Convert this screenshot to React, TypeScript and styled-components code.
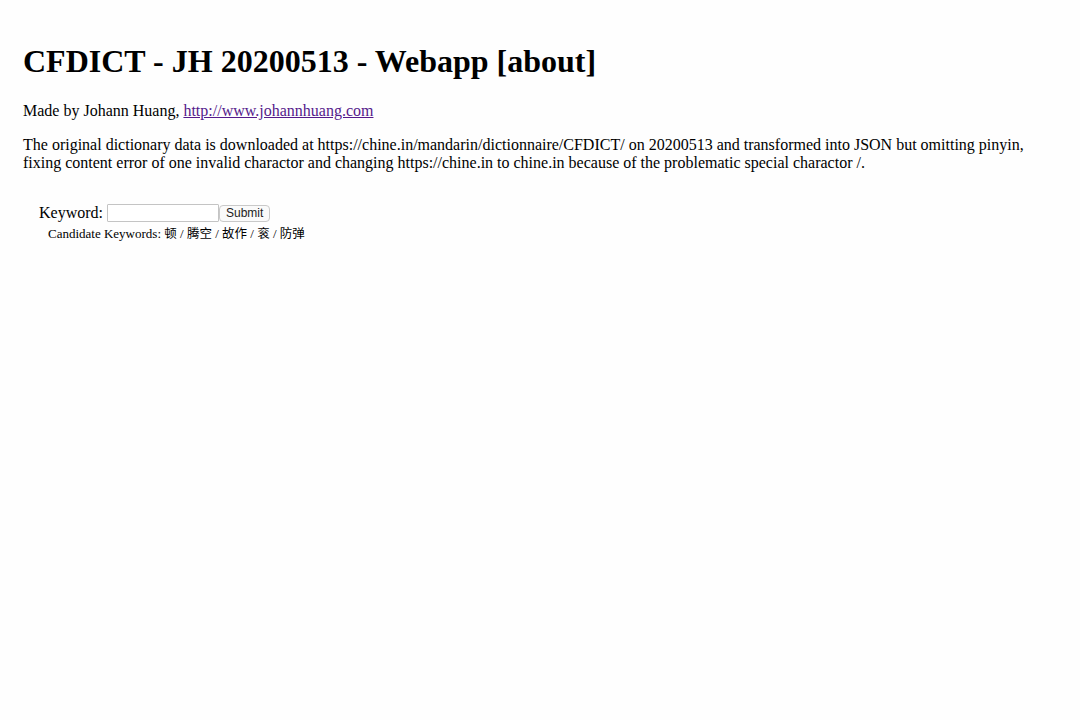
import React from "react";
import styled, { createGlobalStyle } from "styled-components";

const Global = createGlobalStyle`
  html, body { margin: 0; padding: 0; background: #fefefe; }
  body { font-family: "Liberation Serif", "Times New Roman", serif; color: #000; }
`;

const Page = styled.div`
  padding: 22px 23px;
`;

const Title = styled.h1`
  font-size: 32px;
  font-weight: bold;
  margin: 21.44px 0;
`;

const Para = styled.p`
  font-size: 16px;
  margin: 16px 0;
  line-height: 18px;
`;

const Link = styled.a`
  color: #551a8b;
  text-decoration: underline;
`;

const Form = styled.form`
  margin: 31px 0 0 16px;
`;

const Row = styled.div`
  font-size: 16px;
  line-height: 20px;
  display: flex;
  align-items: center;
`;

const Label = styled.label`
  margin-right: 4px;
`;

const Input = styled.input`
  box-sizing: border-box;
  width: 112px;
  height: 18px;
  border: 1px solid #c4c4c4;
  border-radius: 1px;
  padding: 1px 2px;
  margin: 0;
  font-size: 13px;
  background: #fff;
  outline: none;
`;

const Button = styled.button`
  box-sizing: border-box;
  height: 17px;
  padding: 0 6px;
  margin: 1px 0 0 0;
  font-family: "Liberation Sans", Arial, sans-serif;
  font-size: 12px;
  line-height: 15px;
  color: #222;
  background: #fafafa;
  border: 1px solid #c9c9c9;
  border-radius: 4px;
`;

const Candidates = styled.div`
  font-size: 13px;
  line-height: 15px;
  margin: 2px 0 0 9px;
  font-family: "Liberation Serif", "Noto Sans CJK SC", serif;
`;

const Cjk = styled.span`
  font-family: "Noto Sans CJK SC", sans-serif;
  font-size: 12.5px;
`;

export default function App() {
  return (
    <>
      <Global />
      <Page>
        <Title>CFDICT - JH 20200513 - Webapp [about]</Title>
        <Para>
          Made by Johann Huang, <Link href="#">http://www.johannhuang.com</Link>
        </Para>
        <Para>
          The original dictionary data is downloaded at https://chine.in/mandarin/dictionnaire/CFDICT/ on 20200513 and transformed into JSON but omitting pinyin, fixing content error of one invalid charactor and changing https://chine.in to chine.in because of the problematic special charactor /.
        </Para>
        <Form onSubmit={(e) => e.preventDefault()}>
          <Row>
            <Label>Keyword:</Label>
            <Input type="text" />
            <Button type="submit">Submit</Button>
          </Row>
          <Candidates>
            Candidate Keywords: <Cjk>顿</Cjk> / <Cjk>腾空</Cjk> / <Cjk>故作</Cjk> / <Cjk>衮</Cjk> / <Cjk>防弹</Cjk>
          </Candidates>
        </Form>
      </Page>
    </>
  );
}
